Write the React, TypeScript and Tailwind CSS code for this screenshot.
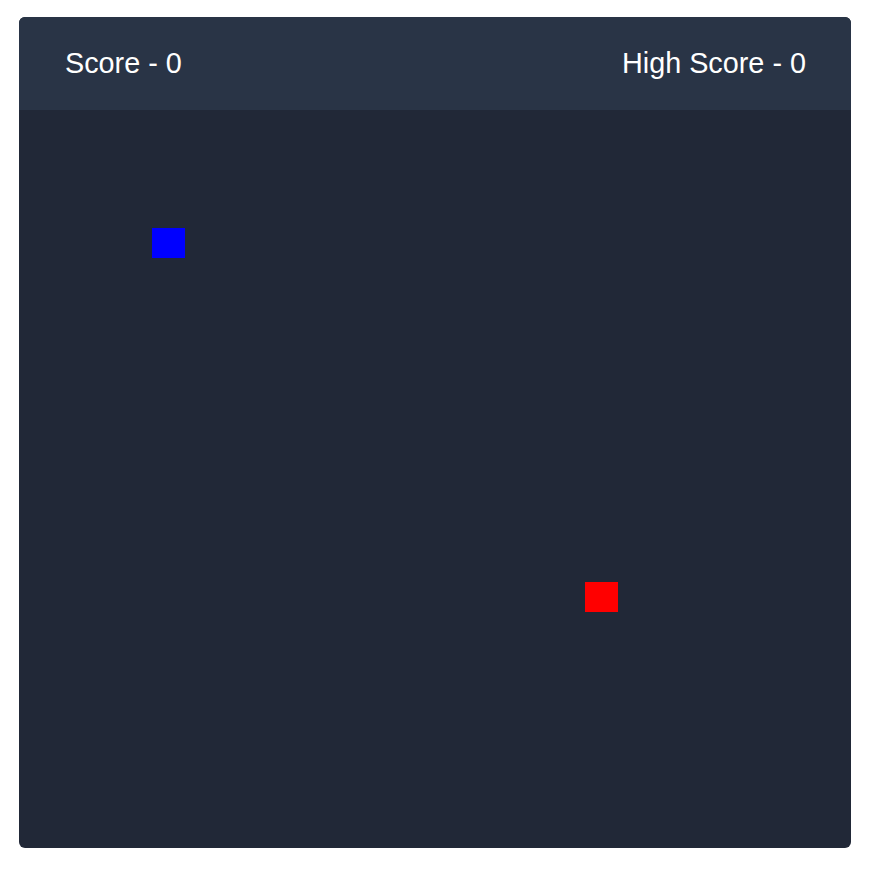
import React from "react";

export default function App() {
  return (
    <div className="min-h-screen bg-white pt-[17px] font-['Liberation_Sans',Arial,sans-serif]">
      <div className="mx-auto flex h-[831px] w-[832px] flex-col overflow-hidden rounded-md bg-[#212837]">
        <div className="flex h-[93px] items-center justify-between bg-[#293446] pl-[46px] pr-[45px] text-[28.8px] leading-none text-white">
          <span>Score - 0</span>
          <span>High Score - 0</span>
        </div>
        <div className="grid flex-1 grid-cols-[repeat(25,1fr)] grid-rows-[repeat(25,1fr)]">
          <div className="col-start-5 row-start-5 bg-[#0000ff]" />
          <div className="col-start-18 row-start-17 bg-[#ff0000]" />
        </div>
      </div>
    </div>
  );
}
